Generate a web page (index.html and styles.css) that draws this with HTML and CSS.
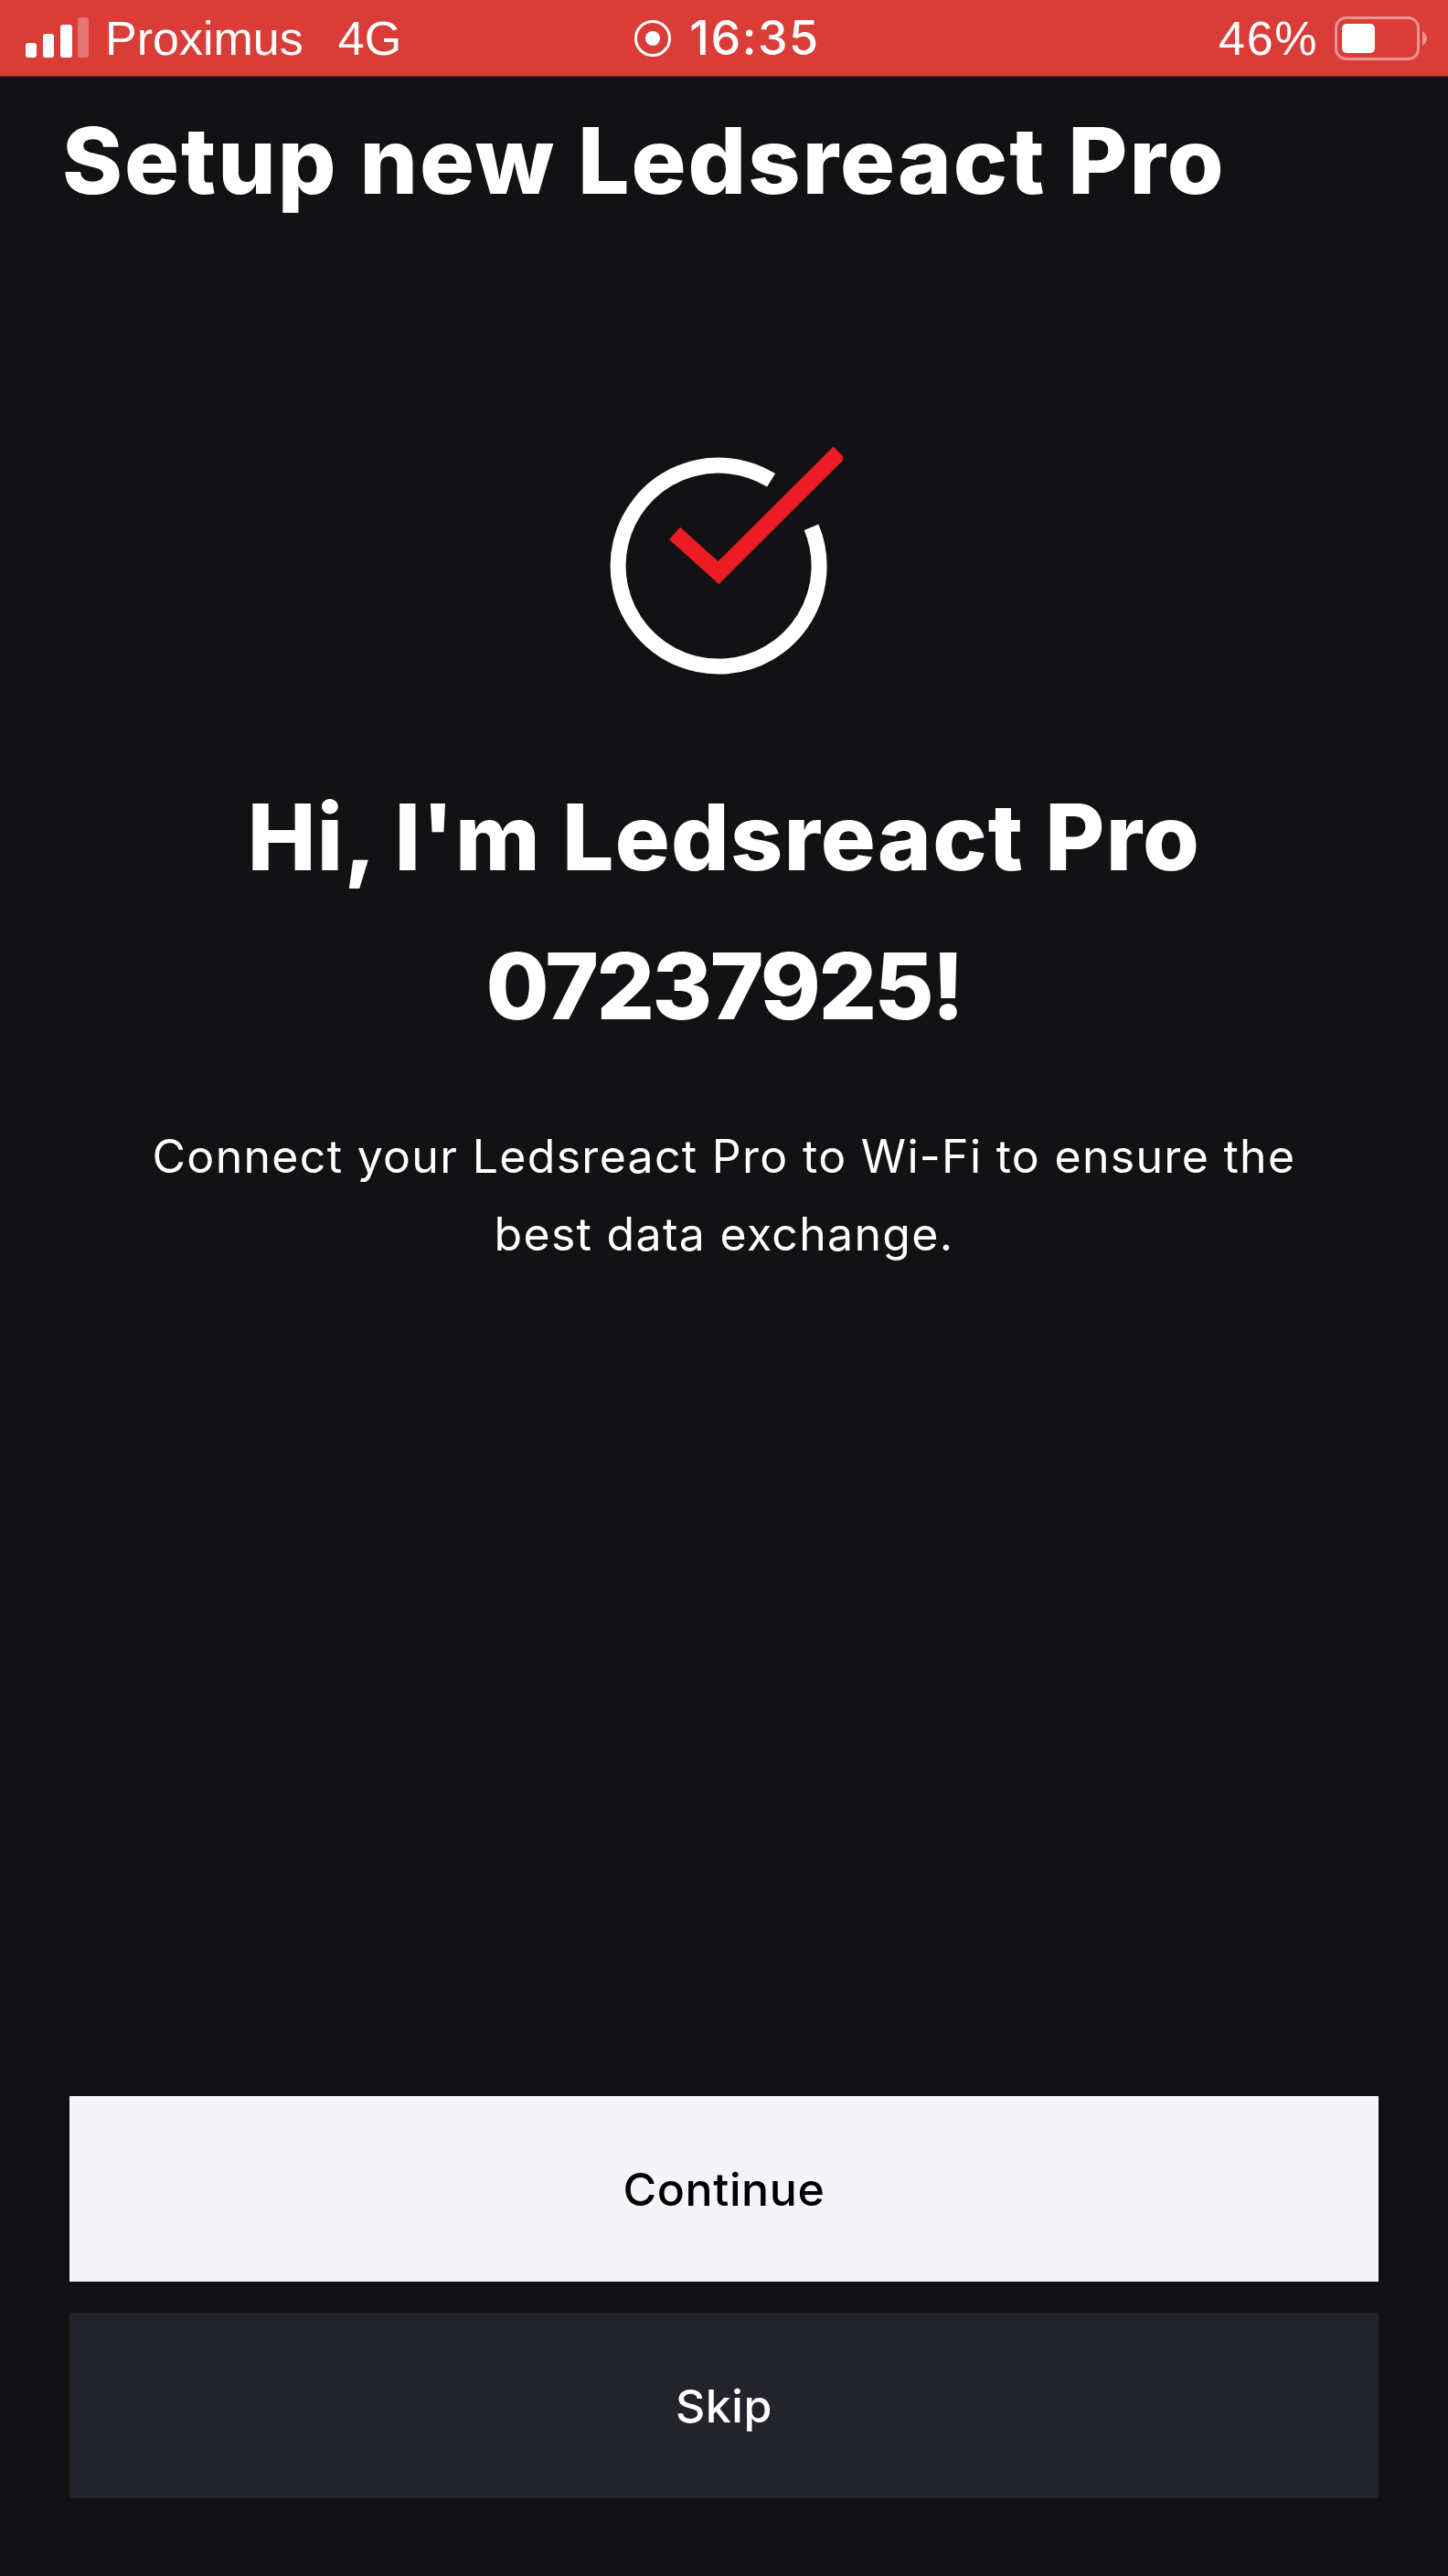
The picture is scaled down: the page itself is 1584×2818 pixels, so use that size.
FILE: index.html
```html
<!DOCTYPE html>
<html>
<head>
  <meta charset="UTF-8">
  <title>Setup new Ledsreact Pro</title>
  <link rel="stylesheet" href="styles.css">
</head>
<body>
  <div class="statusbar">
    <div class="status-left">
      <svg class="signal" width="70" height="46" viewBox="0 0 70 46">
        <rect x="0" y="28" width="12" height="16" rx="3" fill="#fff"/>
        <rect x="19" y="18" width="12" height="26" rx="3" fill="#fff"/>
        <rect x="38" y="8" width="13" height="36" rx="3" fill="#fff"/>
        <rect x="57" y="0" width="12" height="44" rx="3" fill="#fff" fill-opacity=".3"/>
      </svg>
      <span class="carrier">Proximus</span>
      <span class="network">4G</span>
    </div>
    <div class="status-center">
      <svg width="42" height="42" viewBox="0 0 42 42">
        <circle cx="21" cy="21" r="18.5" fill="none" stroke="#fff" stroke-width="3"/>
        <circle cx="21" cy="21" r="8" fill="#fff"/>
      </svg>
      <span class="clock">16:35</span>
    </div>
    <div class="status-right">
      <span class="percent">46%</span>
      <svg class="battery" width="102" height="48" viewBox="0 0 102 48">
        <rect x="1.5" y="1.5" width="90" height="45" rx="11" fill="none" stroke="#fff" stroke-opacity=".45" stroke-width="3"/>
        <rect x="8" y="8" width="36" height="32" rx="5" fill="#fff"/>
        <path d="M96 16c3 2 5 5 5 8s-2 6-5 8z" fill="#fff" fill-opacity=".45"/>
      </svg>
    </div>
  </div>

  <main class="screen">
    <h1 class="title">Setup new Ledsreact Pro</h1>

    <section class="hero">
      <svg class="check" width="260" height="260" viewBox="0 0 260 260">
        <path d="M181.6 45.3A110 110 0 1 0 225.6 96.7" fill="none" stroke="#fff" stroke-width="17"/>
        <path d="M76 103.5L124 146.5L256 15" fill="none" stroke="#ed1c24" stroke-width="18"/>
      </svg>
      <h2 class="greeting">Hi, I'm Ledsreact Pro<br><span class="serial">07237925!</span></h2>
      <p class="intro">Connect your Ledsreact Pro to Wi-Fi to ensure the<br>best data exchange.</p>
    </section>

    <div class="actions">
      <button class="btn btn-primary">Continue</button>
      <button class="btn btn-secondary">Skip</button>
    </div>
  </main>
</body>
</html>
```

FILE: styles.css
```css
* { box-sizing: border-box; }
html, body { margin: 0; height: 100%; }
body { width: 1584px; height: 2818px; display: flex; flex-direction: column; background: #121114; color: #fff; font-family: "Inter", "Liberation Sans", sans-serif; overflow: hidden; }

.statusbar {
  height: 84px; flex: none; padding: 0 22px 0 28px;
  display: grid; grid-template-columns: 1fr auto 1fr; align-items: center;
  background: #da3c37; border-bottom: 1px solid #8a2a28;
  font-family: "Liberation Sans", sans-serif; font-size: 52px;
}
.status-left { display: flex; align-items: center; }
.signal { margin-right: 17px; }
.network { margin-left: 38px; }
.status-center { display: flex; align-items: center; gap: 19px; }
.clock { font-weight: 500; font-family: "Inter", sans-serif; font-size: 52px; letter-spacing: 1.5px; }
.status-right { display: flex; align-items: center; justify-content: flex-end; gap: 18px; }
.percent { letter-spacing: 1.6px; }

.screen { flex: 1; display: flex; flex-direction: column; padding: 0 76px 85px; }
.title { margin: 36px 0 0 -8px; font-size: 100px; line-height: 112px; font-weight: 800; letter-spacing: 2px; white-space: nowrap; }

.hero { display: flex; flex-direction: column; align-items: center; text-align: center; margin-top: 248px; }
.check { display: block; }
.greeting { margin: 94px 0 0; font-size: 100px; line-height: 163px; font-weight: 800; letter-spacing: 1.2px; }
.serial { letter-spacing: -2.6px; }
.intro { margin: 63px 0 0; font-size: 50px; line-height: 85px; font-weight: 400; letter-spacing: 1.3px; }

.actions { margin-top: auto; display: flex; flex-direction: column; gap: 34px; }
.btn { height: 203px; border: 0; font-family: inherit; font-size: 50px; font-weight: 500; letter-spacing: .6px; cursor: pointer; }
.btn-primary { background: #f4f4f9; color: #000; }
.btn-secondary { background: #22232b; color: #fff; }
```
